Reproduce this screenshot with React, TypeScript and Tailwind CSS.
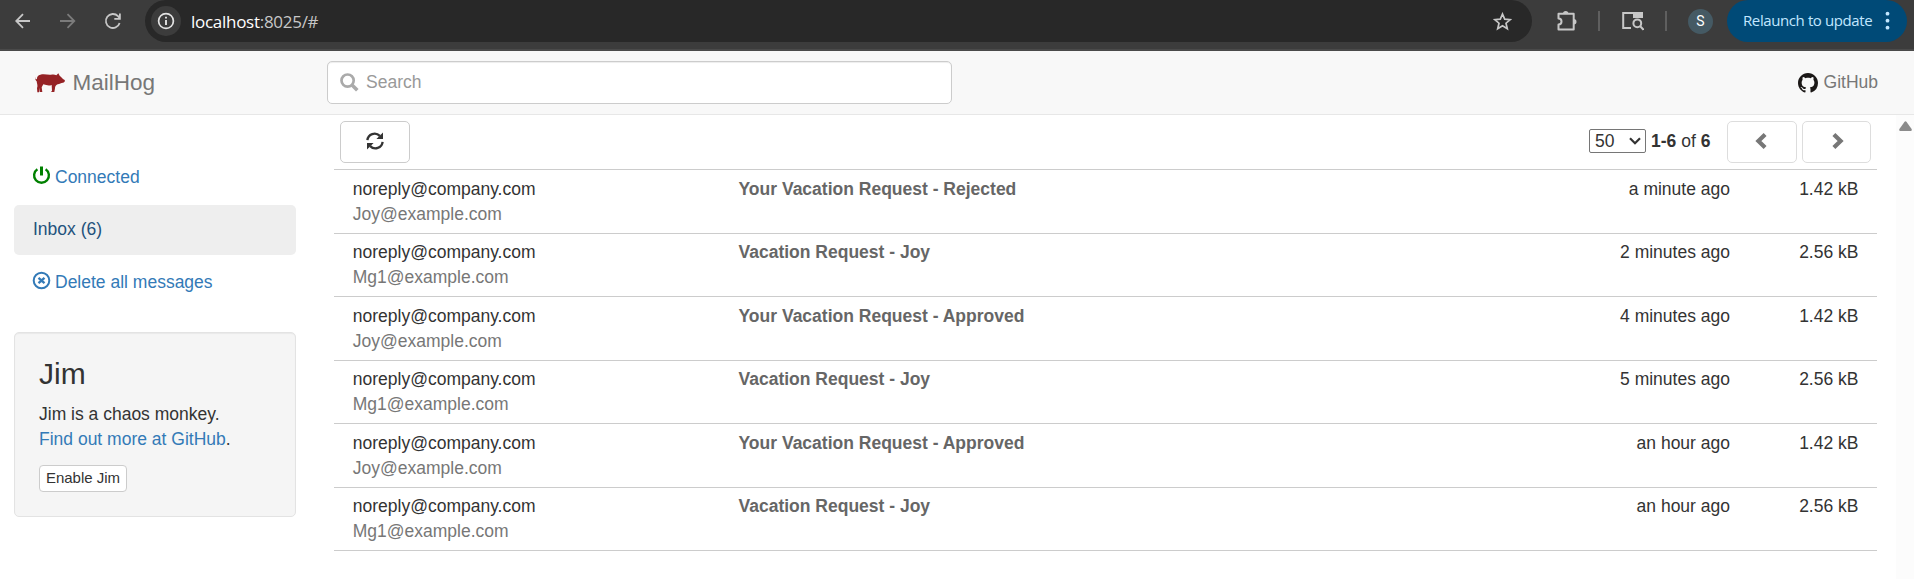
import React from "react";

type Message = { from: string; to: string; subject: string; time: string; size: string };

const messages: Message[] = [
  { from: "noreply@company.com", to: "Joy@example.com", subject: "Your Vacation Request - Rejected", time: "a minute ago", size: "1.42 kB" },
  { from: "noreply@company.com", to: "Mg1@example.com", subject: "Vacation Request - Joy", time: "2 minutes ago", size: "2.56 kB" },
  { from: "noreply@company.com", to: "Joy@example.com", subject: "Your Vacation Request - Approved", time: "4 minutes ago", size: "1.42 kB" },
  { from: "noreply@company.com", to: "Mg1@example.com", subject: "Vacation Request - Joy", time: "5 minutes ago", size: "2.56 kB" },
  { from: "noreply@company.com", to: "Joy@example.com", subject: "Your Vacation Request - Approved", time: "an hour ago", size: "1.42 kB" },
  { from: "noreply@company.com", to: "Mg1@example.com", subject: "Vacation Request - Joy", time: "an hour ago", size: "2.56 kB" },
];

function BrowserBar() {
  return (
    <div className="flex h-[51px] shrink-0 items-start border-b-2 border-[#4a4a4a] bg-[#3c3c3c] text-[#c7c7c7]">
      <div className="flex h-[42px] w-[145px] shrink-0 items-center pl-[15px]">
        <svg width="16" height="16" viewBox="0 0 16 16" fill="none" stroke="currentColor" strokeWidth="1.8">
          <path d="M15 8H1.5M8 1.2L1.2 8L8 14.8" />
        </svg>
        <svg className="ml-[29px] text-[#7b7b7b]" width="16" height="16" viewBox="0 0 16 16" fill="none" stroke="currentColor" strokeWidth="1.8">
          <path d="M0 8H14M7.5 1.2L14.3 8L7.5 14.8" />
        </svg>
        <svg className="ml-[28px]" width="18" height="18" viewBox="0 0 18 18" fill="none" stroke="currentColor" strokeWidth="1.8">
          <path d="M15.6 11A7 7 0 1 1 14 4.2L15.7 6.3M15.9 1.5V6.9H10.3" />
        </svg>
      </div>
      <div className="flex h-[42px] w-[1387px] shrink-0 items-center rounded-full bg-[#282828] pl-[6px]">
        <div className="flex size-[30px] items-center justify-center rounded-full bg-[#3c3c3c]">
          <svg width="18" height="18" viewBox="0 0 18 18" fill="none" stroke="#e3e3e3" strokeWidth="1.7">
            <circle cx="9" cy="9" r="7.4" />
            <path d="M9 8V13M9 4.8V6.6" strokeWidth="1.9" />
          </svg>
        </div>
        <div className="mt-px ml-[10px] font-['Open_Sans',sans-serif] text-[17px] tracking-[-0.28px] text-[#c7c7c7]">
          <span className="text-white">localhost</span>:8025/#
        </div>
        <svg className="mr-[20px] ml-auto" width="19" height="19" viewBox="0 0 19 19" fill="none" stroke="currentColor" strokeWidth="1.7">
          <path d="M9.5 2L11.7 7.1L17.2 7.6L13 11.2L14.3 16.7L9.5 13.8L4.7 16.7L6 11.2L1.8 7.6L7.3 7.1Z" />
        </svg>
      </div>
      <div className="flex h-[42px] items-center">
        <svg className="ml-[24px]" width="22" height="22" viewBox="0 0 22 22" fill="none" stroke="currentColor" strokeWidth="2">
          <path d="M2.5 3.8H17.7V19.5H2.5V14.5A3 3 0 0 0 2.5 8.5Z" strokeLinejoin="round" />
          <path d="M7 3.6A2.7 2.7 0 0 1 12.4 3.6ZM17.8 9A2.7 2.7 0 0 1 17.8 14.4Z" fill="currentColor" stroke="none" />
        </svg>
        <div className="ml-[20px] h-5 w-[2px] bg-[#5f5f5f]" />
        <svg className="ml-[22px]" width="22" height="20" viewBox="0 0 22 20" fill="none" stroke="currentColor" strokeWidth="2">
          <path d="M9 17H1.2V2H20V7" />
          <path d="M11 1H21V7H11Z" fill="currentColor" stroke="none" />
          <circle cx="15.3" cy="12.3" r="3.9" />
          <path d="M18 15L21.5 18.8" />
        </svg>
        <div className="ml-[21px] h-5 w-[2px] bg-[#5f5f5f]" />
        <div className="ml-[21px] flex size-[25px] items-center justify-center rounded-full bg-[#455a64] font-['Roboto',sans-serif] text-[14px] text-white">S</div>
        <div className="ml-[14px] flex h-[42px] w-[180px] items-center rounded-full bg-[#004a77] pl-[16px] font-['Open_Sans',sans-serif] text-[15px] text-[#c2e7ff]">
          <span className="w-[130px] -mt-px whitespace-nowrap tracking-[-0.4px]">Relaunch to update</span>
          <svg className="ml-[12px]" width="5" height="20" viewBox="0 0 5 20" fill="currentColor">
            <circle cx="2.5" cy="2.7" r="1.9" />
            <circle cx="2.5" cy="9.7" r="1.9" />
            <circle cx="2.5" cy="16.7" r="1.9" />
          </svg>
        </div>
      </div>
    </div>
  );
}

function Pig() {
  return (
    <svg width="30" height="20" viewBox="0 0 90 60" fill="#952225">
      <path d="M2 12C0 17 3 21 6 17C6 11 9 6 16 5C28 2 38 6 48 5C54 4 60 4 64 7L70 1L74 8C79 11 81 17 89 21C91 25 88 29 84 29C78 29 74 33 68 34C62 37 60 40 60 46L58 57H48L51 53L50 36C42 39 34 37 25 34L20 43L22 57H14L13 44L12 58H7L6 45C9 38 6 33 5 25C2 23 -1 15 2 12Z" />
    </svg>
  );
}

function Navbar() {
  return (
    <div className="flex h-16 shrink-0 border-b border-[#e7e7e7] bg-[#f8f8f8] text-[#777]">
      <div className="flex h-[63px] w-[327px] shrink-0 items-center pl-[35px]">
        <Pig />
        <span className="-mt-px ml-[7.5px] text-[22.5px] leading-[25px]">MailHog</span>
      </div>
      <div className="mt-[10px] flex h-[43px] w-[625px] items-center rounded-[5px] border border-[#ccc] bg-white pl-[12px] shadow-[inset_0_1px_1px_rgba(0,0,0,0.075)]">
        <svg width="19" height="19" viewBox="0 0 19 19" fill="none" stroke="#aaa">
          <circle cx="7.6" cy="7.6" r="6.1" strokeWidth="2.7" />
          <path d="M12 12L17.3 17.3" strokeWidth="3.6" />
        </svg>
        <span className="ml-[7px] text-[#999]">Search</span>
      </div>
      <div className="mr-[36px] ml-auto flex h-[63px] items-center">
        <svg className="mt-px" width="20" height="20" viewBox="0 0 16 16" fill="#1b1817">
          <path d="M8 0C3.58 0 0 3.58 0 8c0 3.54 2.29 6.53 5.47 7.59.4.07.55-.17.55-.38 0-.19-.01-.82-.01-1.49-2.01.37-2.53-.49-2.69-.94-.09-.23-.48-.94-.82-1.13-.28-.15-.68-.52-.01-.53.63-.01 1.08.58 1.23.82.72 1.21 1.87.87 2.33.66.07-.52.28-.87.51-1.07-1.78-.2-3.64-.89-3.64-3.95 0-.87.31-1.59.82-2.15-.08-.2-.36-1.02.08-2.12 0 0 .67-.21 2.2.82.64-.18 1.32-.27 2-.27s1.36.09 2 .27c1.53-1.04 2.2-.82 2.2-.82.44 1.1.16 1.92.08 2.12.51.56.82 1.27.82 2.15 0 3.07-1.87 3.75-3.65 3.95.29.25.54.73.54 1.48 0 1.07-.01 1.93-.01 2.2 0 .21.15.46.55.38A8.01 8.01 0 0 0 16 8c0-4.42-3.58-8-8-8z" />
        </svg>
        <span className="ml-[6px]">GitHub</span>
      </div>
    </div>
  );
}

function Sidebar() {
  return (
    <div className="w-[334px] shrink-0 pt-[37px] pl-[14px]">
      <div className="w-[282px] text-[#337ab7]">
        <div className="flex h-[50px] items-center pl-[18px]">
          <svg className="-mt-[4px]" width="19" height="19" viewBox="0 0 19 19" fill="none" stroke="#008000" strokeWidth="2.4">
            <path d="M5.4 3.2A7.4 7.4 0 1 0 13.6 3.2" />
            <path d="M9.5 0.5V9.5" strokeWidth="3" />
          </svg>
          <span className="ml-[4px]">Connected</span>
        </div>
        <div className="mt-[3px] flex h-[50px] items-center rounded-[5px] bg-[#eee] pb-[2px] pl-[19px] text-[#23527c]">Inbox (6)</div>
        <div className="mt-[2px] flex h-[50px] items-center pl-[18px]">
          <svg className="-mt-[4px]" width="19" height="19" viewBox="0 0 19 19" fill="none" stroke="currentColor">
            <circle cx="9.5" cy="9.5" r="7.8" strokeWidth="2" />
            <path d="M6.5 6.9L12.5 12.1M12.5 6.9L6.5 12.1" strokeWidth="2.4" />
          </svg>
          <span className="ml-[4px]">Delete all messages</span>
        </div>
      </div>
      <div className="mt-[25px] h-[185px] w-[282px] rounded-[5px] border border-[#e3e3e3] bg-[#f5f5f5] pt-[24px] pl-[24px] shadow-[inset_0_1px_1px_rgba(0,0,0,0.05)]">
        <h3 className="text-[30px] leading-[33px]">Jim</h3>
        <p className="mt-[12px] leading-[25px]">
          Jim is a chaos monkey.
          <br />
          <span className="text-[#337ab7]">Find out more at GitHub</span>.
        </p>
        <button className="mt-[13px] flex h-[27px] w-[88px] items-center justify-center rounded-[4px] border border-[#ccc] bg-white text-[15px]">Enable Jim</button>
      </div>
    </div>
  );
}

function Toolbar() {
  return (
    <div className="flex h-[54px] pt-[6px] pl-[6px]">
      <button className="flex h-[42px] w-[70px] items-center justify-center rounded-[5px] border border-[#ccc] bg-white">
        <svg className="-mt-[3px]" width="18" height="18" viewBox="0 0 18 18" fill="none" stroke="#333" strokeWidth="2.3">
          <path d="M1.4 8.2A7.2 7.2 0 0 1 13.8 3.9M16.6 9.8A7.2 7.2 0 0 1 4.2 14.1" />
          <path d="M17 0.4V7H10.4ZM1 17.6V11H7.6Z" fill="#333" stroke="none" />
        </svg>
      </button>
      <div className="mr-[6px] ml-auto flex">
        <div className="mt-[8px] flex h-6 w-[57px] items-center rounded-[2px] border border-[#767676] bg-white pl-[5px]">
          50
          <svg className="ml-auto mr-[4px]" width="12" height="8" viewBox="0 0 12 8" fill="none" stroke="#333" strokeWidth="2.2">
            <path d="M1 1.2L6 6.2L11 1.2" />
          </svg>
        </div>
        <div className="mt-[8px] ml-[5px] w-[76px] leading-[25px]">
          <b>1-6</b> of <b>6</b>
        </div>
        <button className="flex h-[42px] w-[70px] items-center justify-center rounded-[5px] border border-[#ddd] bg-white">
          <svg className="-mt-[3px]" width="16" height="16" viewBox="0 0 16 16" fill="none" stroke="#777" strokeWidth="4.2">
            <path d="M11.1 1.5L4.4 8L11.1 14.5" />
          </svg>
        </button>
        <button className="ml-[5px] flex h-[42px] w-[69px] items-center justify-center rounded-[5px] border border-[#ddd] bg-white">
          <svg className="-mt-[3px]" width="16" height="16" viewBox="0 0 16 16" fill="none" stroke="#777" strokeWidth="4.2">
            <path d="M4.9 1.5L11.6 8L4.9 14.5" />
          </svg>
        </button>
      </div>
    </div>
  );
}

function MessageRow({ m }: { m: Message }) {
  return (
    <div className="flex h-16 border-t border-[#ccc] pr-[18.5px] pl-[18.75px] leading-[25px] odd:pt-[7px] even:h-[63px] even:pt-[6px]">
      <div className="w-[385.75px] shrink-0">
        <div>{m.from}</div>
        <div className="text-[#777]">{m.to}</div>
      </div>
      <div className="flex-1 font-bold text-[#666]">{m.subject}</div>
      <div className="w-[200px] text-right">{m.time}</div>
      <div className="w-[128.5px] text-right">{m.size}</div>
    </div>
  );
}

export default function App() {
  return (
    <div className="flex h-[579px] w-[1914px] flex-col overflow-hidden bg-white font-['Liberation_Sans',Arial,sans-serif] text-[17.5px] text-[#333]">
      <BrowserBar />
      <Navbar />
      <div className="flex min-h-0 flex-1">
        <Sidebar />
        <div className="w-[1543px] shrink-0">
          <Toolbar />
          <div className="border-b border-[#ccc]">
            {messages.map((m, i) => (
              <MessageRow key={i} m={m} />
            ))}
          </div>
        </div>
        <div className="ml-auto flex w-[18px] justify-center bg-[#fcfcfc] pt-[6px]">
          <svg width="13" height="10" viewBox="0 0 13 10" fill="#8b8b8b">
            <path d="M5.4 1Q6.5 -0.4 7.6 1L12.6 8Q13.2 9.7 11.8 9.9H1.2Q-0.2 9.7 0.4 8Z" />
          </svg>
        </div>
      </div>
    </div>
  );
}
